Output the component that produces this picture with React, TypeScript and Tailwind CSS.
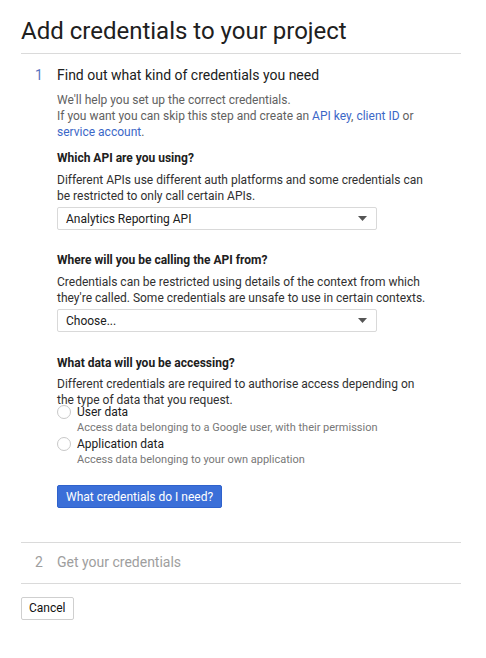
function Select({ value }: { value: string }) {
  return (
    <div className="mt-[3px] flex h-[23px] w-[320px] items-center justify-between rounded-[2px] border border-[#d9d9d9] bg-white pl-[8px] pr-[8px] text-[12px] text-[#202020]">
      <span>{value}</span>
      <svg width="9" height="5" viewBox="0 0 9 5" className="mr-[1px]">
        <path d="M0 0h9L4.5 5z" fill="#555" />
      </svg>
    </div>
  );
}

function Radio({ label, hint, first }: { label: string; hint: string; first?: boolean }) {
  return (
    <div className={first ? "" : "mt-[1px]"}>
      <div className="flex items-center">
        <span className="h-[14px] w-[14px] rounded-full border border-[#c8c8c8] bg-white" />
        <span className="ml-[6px] text-[12px] leading-[14px] text-[#202020]">{label}</span>
      </div>
      <p className="ml-[20px] mt-[1px] text-[11px] leading-[16px] text-[#777]">{hint}</p>
    </div>
  );
}

export default function App() {
  return (
    <div className="min-h-[658px] bg-white font-['Roboto',sans-serif]">
      <div className="mx-[21px] w-[440px]">
        <h1 className="mt-[17px] border-b border-[#dadada] pb-[8px] text-[24px] leading-[28px] text-[#202020]">
          Add credentials to your project
        </h1>

        <section className="pt-[11px]">
          <div className="flex items-center text-[14px] leading-[20px]">
            <span className="w-[36px] pl-[14px] text-[#5874bf]">1</span>
            <span className="text-[#202020]">Find out what kind of credentials you need</span>
          </div>

          <div className="ml-[36px] w-[372px]">
            <p className="mt-[7px] text-[12px] leading-[16px] text-[#616161]">
              We'll help you set up the correct credentials.
              <br />
              If you want you can skip this step and create an{" "}
              <a className="text-[#3b67c7]">API key</a>, <a className="text-[#3b67c7]">client ID</a> or{" "}
              <a className="text-[#3b67c7]">service account</a>.
            </p>

            <h2 className="mt-[10px] text-[12px] font-bold leading-[16px] text-[#202020]">Which API are you using?</h2>
            <p className="mt-[6px] text-[12px] leading-[16px] text-[#303030]">
              Different APIs use different auth platforms and some credentials can be restricted to only call certain APIs.
            </p>
            <Select value="Analytics Reporting API" />

            <h2 className="mt-[22px] text-[12px] font-bold leading-[16px] text-[#202020]">
              Where will you be calling the API from?
            </h2>
            <p className="mt-[6px] text-[12px] leading-[16px] text-[#303030]">
              Credentials can be restricted using details of the context from which they're called. Some credentials are
              unsafe to use in certain contexts.
            </p>
            <Select value="Choose..." />

            <h2 className="mt-[23px] text-[12px] font-bold leading-[16px] text-[#202020]">
              What data will you be accessing?
            </h2>
            <p className="mt-[5px] text-[12px] leading-[16px] text-[#303030]">
              Different credentials are required to authorise access depending on the type of data that you request.
            </p>
            <div className="-mt-[3px]">
              <Radio first label="User data" hint="Access data belonging to a Google user, with their permission" />
              <Radio label="Application data" hint="Access data belonging to your own application" />
            </div>

            <button className="mt-[17px] h-[23px] rounded-[2px] border border-[#2f62cc] bg-[#3b6fd8] px-[8px] text-[12px] text-white">
              What credentials do I need?
            </button>
          </div>
        </section>

        <div className="mt-[34px] border-t border-[#dadada] pb-[11px] pt-[9px]">
          <div className="flex items-center text-[14px] leading-[20px] text-[#9e9e9e]">
            <span className="w-[36px] pl-[14px]">2</span>
            <span>Get your credentials</span>
          </div>
        </div>

        <div className="border-t border-[#dadada] pt-[11px]">
          <button className="h-[23px] rounded-[2px] border border-[#cfcfcf] bg-white px-[7px] text-[12px] text-[#111]">
            Cancel
          </button>
        </div>
      </div>
    </div>
  );
}
